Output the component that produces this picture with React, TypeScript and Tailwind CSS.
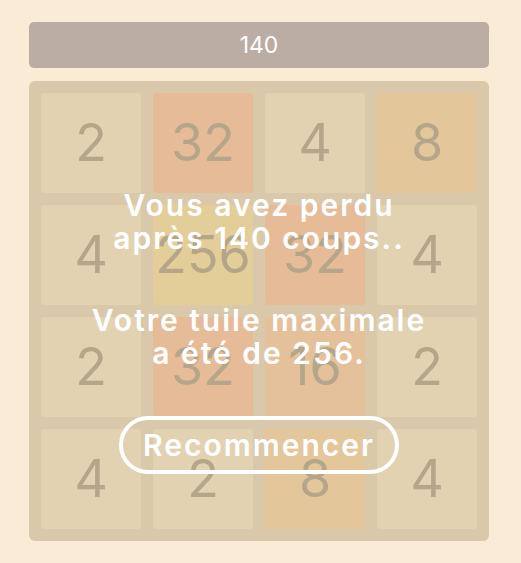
const tiles = [
  [2, 32, 4, 8],
  [4, 256, 32, 4],
  [2, 32, 16, 2],
  [4, 2, 8, 4],
];

const tileColor: Record<number, string> = {
  2: "bg-[#e2d2b2]",
  4: "bg-[#e2d2b2]",
  8: "bg-[#e4c69b]",
  16: "bg-[#e4c19a]",
  32: "bg-[#e5bb98]",
  256: "bg-[#e3cd99]",
};

const App = () => {
  return (
    <main
      className="w-[521px] h-[563px] bg-[#faebd7] pt-[22px] pl-[29px]"
      style={{ fontFamily: "Inter, sans-serif" }}
    >
      <div className="w-[460px] h-[46px] rounded-[5px] bg-[#bbada3] text-white text-[23px] flex items-center justify-center">
        140
      </div>
      <div className="relative mt-[13px] w-[460px] h-[460px] rounded-[6px] bg-[#d9c8a9] p-[12px] grid grid-cols-4 gap-[12px]">
        {tiles.flat().map((n, i) => (
          <div
            key={i}
            className={`rounded-[3px] flex items-center justify-center text-[52px] text-[#b5a68a] ${tileColor[n]}`}
          >
            {n}
          </div>
        ))}
        <div className="absolute inset-0 flex flex-col items-center pt-[108px] text-white font-semibold text-[30px] leading-[33px] tracking-[2px] text-center">
          <p>
            Vous avez perdu
            <br />
            après 140 coups..
          </p>
          <p className="mt-[49px]">
            Votre tuile maximale
            <br />
            a été de 256.
          </p>
          <button className="mt-[46px] h-[58px] px-[20px] rounded-full border-[4px] border-white">
            Recommencer
          </button>
        </div>
      </div>
    </main>
  );
};

export default App;
